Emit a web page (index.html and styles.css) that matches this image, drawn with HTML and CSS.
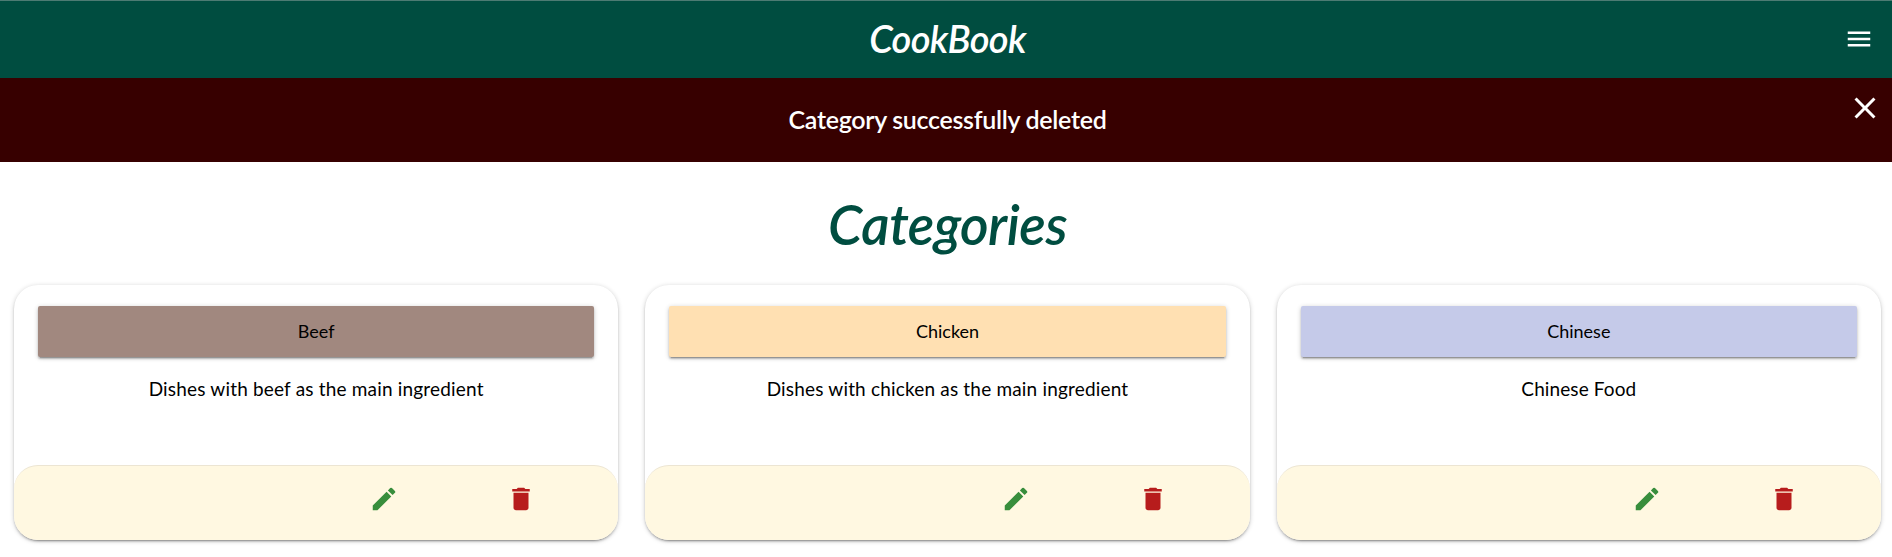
FILE: index.html
```html
<!DOCTYPE html>
<html lang="en">
<head>
<meta charset="utf-8">
<title>CookBook</title>
<link rel="stylesheet" href="styles.css">
</head>
<body>
<svg class="sprite" aria-hidden="true">
  <symbol id="edit" viewBox="0 0 24 24"><path d="M3 17.25V21h3.75L17.81 9.94l-3.75-3.75L3 17.25zM20.71 7.04a1 1 0 0 0 0-1.41l-2.34-2.34a1 1 0 0 0-1.41 0l-1.83 1.83 3.750 3.750 1.830-1.830z"/></symbol>
  <symbol id="delete" viewBox="0 0 24 24"><path d="M6 19c0 1.1.9 2 2 2h8c1.1 0 2-.9 2-2V7H6v12zM19 4h-3.500l-1-1h-5l-1 1H5v2h14V4z"/></symbol>
</svg>
<nav class="navbar">
  <a class="logo"><span>CookBook</span></a>
  <svg class="menu" viewBox="0 0 24 24"><path d="M3 18h18v-2H3v2zm0-5h18v-2H3v2zm0-7v2h18V6H3z"/></svg>
</nav>
<div class="flash">
  <p class="flash-text"><span>Category successfully deleted</span></p>
  <svg class="close" viewBox="0 0 24 24"><path d="M19 6.410L17.590 5 12 10.590 6.410 5 5 6.410 10.590 12 5 17.590 6.410 19 12 13.410 17.590 19 19 17.590 13.410 12z"/></svg>
</div>
<h1 class="title"><span>Categories</span></h1>
<main class="grid">
  <section class="card">
    <div class="content"><a class="btn beef"><span>Beef</span></a><p class="desc"><span>Dishes with beef as the main ingredient</span></p></div>
    <div class="actions"><svg class="edit"><use href="#edit"/></svg><svg class="delete"><use href="#delete"/></svg></div>
  </section>
  <section class="card">
    <div class="content"><a class="btn chicken"><span>Chicken</span></a><p class="desc"><span>Dishes with chicken as the main ingredient</span></p></div>
    <div class="actions"><svg class="edit"><use href="#edit"/></svg><svg class="delete"><use href="#delete"/></svg></div>
  </section>
  <section class="card">
    <div class="content"><a class="btn chinese"><span>Chinese</span></a><p class="desc short"><span>Chinese Food</span></p></div>
    <div class="actions"><svg class="edit"><use href="#edit"/></svg><svg class="delete"><use href="#delete"/></svg></div>
  </section>
</main>
</body>
</html>
```
FILE: styles.css
```css
* { box-sizing: border-box; }
body { margin: 0; min-height: 100vh; background: #fff; color: #000; font-family: Lato, sans-serif; }
p, h1 { margin: 0; }
.sprite { display: none; }
.navbar {
  height: 78px; padding: 0 18px 2px 51px; background: #004d40; color: #fff; fill: #fff;
  border-top: 1px solid #4d7b73;
  display: flex; align-items: center;
}
.logo { flex: 1; text-align: center; font-size: 38px; font-style: italic; font-weight: 600; letter-spacing: -.7px; padding-bottom: 2px; }
.menu { width: 30px; height: 30px; }
.flash {
  height: 84px; padding: 0 9px 0 48px; background: #370000; color: #fff; fill: #fff;
  display: flex; align-items: flex-start;
}
.flash-text { flex: 1; text-align: center; font-size: 25px; font-weight: 600; line-height: 82px; letter-spacing: -.3px; }
.close { width: 36px; height: 36px; margin-top: 12px; }
.title {
  height: 123px; padding: 22px 0 0 3px; text-align: center; color: #004d40;
  font-size: 55px; font-style: italic; font-weight: 600; line-height: 80px; letter-spacing: -.5px;
}
.grid { display: grid; grid-template-columns: repeat(3, 1fr); column-gap: 27px; padding: 0 11px 17px 14px; }
.card {
  height: 255px; border-radius: 24px; background: #fff;
  display: flex; flex-direction: column;
  box-shadow: 0 2px 2px 0 rgba(0,0,0,.14), 0 3px 1px -2px rgba(0,0,0,.2), 0 1px 5px 0 rgba(0,0,0,.2);
}
.content { flex: 1; padding: 21px 24px 0; text-align: center; }
.btn {
  display: block; height: 51px; border-radius: 2px; font-size: 18px; line-height: 50px;
  box-shadow: 0 2px 2px 0 rgba(0,0,0,.18), 0 3px 1px -2px rgba(0,0,0,.2), 0 1px 5px 0 rgba(0,0,0,.2);
}
.beef { background: #a1887f; }
.chicken { background: #ffe0b2; }
.chinese { background: #c5cae9; }
.desc { margin-top: 17px; font-size: 19px; line-height: 30px; letter-spacing: .18px; }
.short { letter-spacing: .1px; }
.actions {
  height: 75px; padding: 18px 82px 0 0; border-top: 1px solid #ece5d3; border-radius: 24px; background: #fff8e1;
  display: flex; justify-content: flex-end; gap: 107px;
}
.actions svg { width: 30px; height: 30px; }
.edit { fill: #388e3c; }
.delete { fill: #b71c1c; }
```
